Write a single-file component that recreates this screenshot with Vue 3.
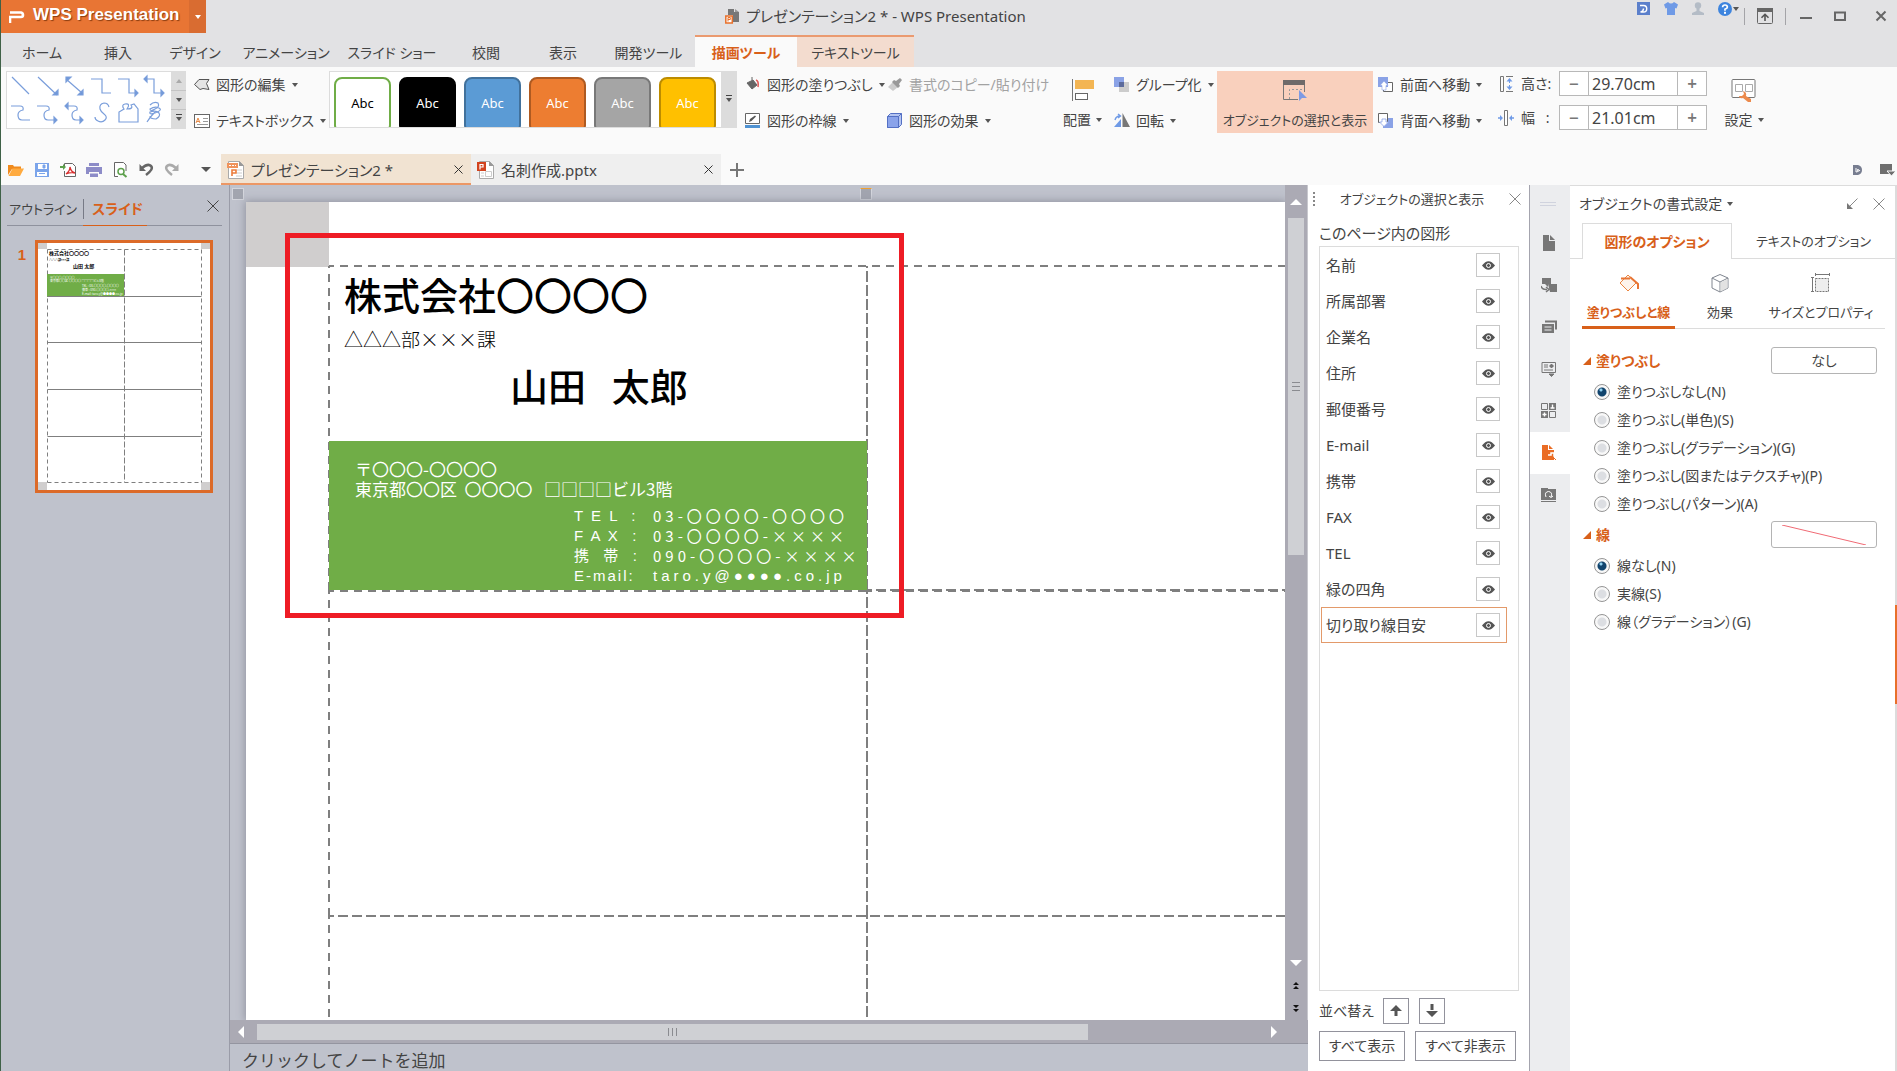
<script setup>
import { ref } from 'vue'

const menuTabs = [
  { label: 'ホーム', width: 80 },
  { label: '挿入', width: 72 },
  { label: 'デザイン', width: 82 },
  { label: 'アニメーション', width: 100 },
  { label: 'スライド ショー', width: 112 },
  { label: '校閲', width: 76 },
  { label: '表示', width: 78 },
  { label: '開発ツール', width: 93 },
  { label: '描画ツール', width: 102, kind: 'active' },
  { label: 'テキストツール', width: 117, kind: 'context' },
]

const shapeStyles = ['outline', 'black', 'blue', 'orange', 'gray', 'yellow']

const objects = ref([
  '名前', '所属部署', '企業名', '住所', '郵便番号', 'E-mail',
  '携帯', 'FAX', 'TEL', '緑の四角', '切り取り線目安',
])
const selected = ref('切り取り線目安')

const height = ref('29.70cm')
const width = ref('21.01cm')

const fill = ref('N')
const fillOptions = [
  { value: 'N', label: '塗りつぶしなし(N)' },
  { value: 'S', label: '塗りつぶし(単色)(S)' },
  { value: 'G', label: '塗りつぶし(グラデーション)(G)' },
  { value: 'P', label: '塗りつぶし(図またはテクスチャ)(P)' },
  { value: 'A', label: '塗りつぶし(パターン)(A)' },
]
const line = ref('N')
const lineOptions = [
  { value: 'N', label: '線なし(N)' },
  { value: 'S', label: '実線(S)' },
  { value: 'G', label: '線（グラデーション）(G)' },
]

const contacts = [
  { label: 'T E L  :', value: '03-〇〇〇〇-〇〇〇〇' },
  { label: 'F A X  :', value: '03-〇〇〇〇-××××' },
  { label: '携  帯  :', value: '090-〇〇〇〇-××××' },
  { label: 'E-mail:', value: 'taro.y@●●●●.co.jp', latin: true },
]
</script>

<template>
  <div class="app">
    <header class="top">
      <div class="titlebar">
        <button class="brand">
          <svg width="16" height="12" viewBox="0 0 16 12"><path d="M1 12V6h11q2 0 2-2T12 1.500H1" fill="none" stroke="#fff" stroke-width="2.600" /></svg>
          <span class="brand-name">WPS Presentation</span>
          <span class="brand-drop"><i class="caret"></i></span>
        </button>
        <h1 class="doc-title">
          <svg width="15" height="15" viewBox="0 0 15 15">
            <path d="M3 0h6v3h5v10H8V6H3z" fill="#777" /><path d="M10 0l4 3h-4z" fill="#999" />
            <rect x=".8" y="7" width="6.500" height="7" fill="#fff" stroke="#e8702a" stroke-width="1.500" />
            <path d="M3 12.500v-4h2.300v2H3" fill="none" stroke="#e8702a" />
          </svg>
          プレゼンテーション2 * - WPS Presentation
        </h1>
        <div class="tools">
          <button aria-label="Docer"><svg width="14" height="14" viewBox="0 0 14 14"><rect width="13" height="13" fill="#5b7fcb" /><path d="M3 3.500h3.500a3 3 0 010 6.500H3.500q3-.5 3-3.500" fill="none" stroke="#fff" stroke-width="1.400" /></svg></button>
          <button aria-label="スキン"><svg width="14" height="14" viewBox="0 0 14 14"><path d="M0 2.500L4 0q3 3 6 0l4 2.500-1.500 4-1.500-.5v7H3V6l-1.500.5z" fill="#6f9ae6" /></svg></button>
          <button aria-label="アカウント"><svg width="14" height="14" viewBox="0 0 14 14"><circle cx="7" cy="3.500" r="3.200" fill="#b4bcc6" /><path d="M5.500 6h3v3l4.500 2v2H1v-2l4.500-2z" fill="#b4bcc6" /></svg></button>
          <button aria-label="ヘルプ" class="help"><svg width="14" height="14" viewBox="0 0 14 14"><circle cx="7" cy="7" r="7" fill="#3d84de" /><path d="M4.600 5.300Q4.700 3 7 3t2.400 2.100Q9.400 6.500 7 7.200v1.600" fill="none" stroke="#fff" stroke-width="1.700" /><rect x="6" y="9.800" width="2" height="2" fill="#fff" /></svg><i class="caret"></i></button>
        </div>
        <div class="window-btns">
          <i class="sep"></i>
          <button class="pin" aria-label="リボン"><svg width="16" height="16" viewBox="0 0 16 16"><rect x=".5" y=".5" width="15" height="15" rx="1" fill="none" stroke="#666" /><rect width="16" height="4" fill="#666" /><path d="M8 13V7M4.500 9.800L8 6.300l3.500 3.500" fill="none" stroke="#555" stroke-width="1.600" /></svg></button>
          <i class="sep"></i>
          <button class="min" aria-label="最小化"><svg width="12" height="12"><rect y="7" width="12" height="2" fill="#666" /></svg></button>
          <button class="max" aria-label="最大化"><svg width="12" height="12"><path d="M1 2.500h10v7.500H1z" fill="none" stroke="#666" stroke-width="2" /></svg></button>
          <button class="close" aria-label="閉じる"><svg width="12" height="12"><path d="M1.500 1.500l9 9M10.500 1.500l-9 9" stroke="#666" stroke-width="2" /></svg></button>
        </div>
      </div>
      <nav class="menu">
        <button v-for="t in menuTabs" :key="t.label" :class="t.kind" :style="{ width: t.width + 'px' }">{{ t.label }}</button>
      </nav>
    </header>

    <section class="ribbon">
      <div class="shape-gallery">
        <svg width="164" height="56" viewBox="0 0 164 56" fill="none" stroke="#7a9edb" stroke-width="1.200">
          <path d="M5 5l17 17M31 5l19 18M59 7l16 14" />
          <path d="M51 18v5h-5zM59 5h5l-5 5zM76 18v5h-5z" fill="#6f97d8" />
          <path d="M84 7h11v14h9M111 7h11v14h7M139 7h8v14h9" />
          <path d="M128 18l3 3-3 3zM140 4l-3 3 3 3zM154 18l3 3-3 3z" fill="#6f97d8" />
          <path d="M4 34h9q4 0 3 4-5 1-5 5 0 5 4 5h8M30 34h9q4 0 3 4-5 1-5 5 0 5 4 5h7M60 34h7q4 0 3 4-5 1-5 5 0 5 4 5h5" />
          <path d="M47 45l3 3-3 3zM61 31l-3 3 3 3zM73 45l3 3-3 3z" fill="#6f97d8" />
          <path d="M102 35q-1-4-5-4-5 1-4 6 1 3 4 5 4 3 1 6-3 3-7 1-3-1-3-4" />
          <path d="M112 50V40l5-3q-3-4 1-5 6-1 2 5 7 0 4-4l3-1 4 5v13z" />
          <path d="M143 33q4-4 8-2 2 4-3 6-5 3-5 0 5-3 9-1 4 2-4 5-6 2-5-1 6-2 9 1 2 3-3 6-6 0-6-3M140 50q3-5 8-10" />
        </svg>
        <div class="scroller"><button aria-label="上"><i class="caret up dim"></i></button><button aria-label="下"><i class="caret"></i></button><button aria-label="その他"><i class="caret bar"></i></button></div>
      </div>

      <div class="cmds cmds-edit">
        <button><svg width="16" height="14" viewBox="0 0 16 14"><path d="M5 1.500h10l-2.500 4 2.500 6-6-1-3 1-5.500-5z" fill="#e4e4e4" stroke="#555" /></svg>図形の編集<i class="caret"></i></button>
        <button><svg width="16" height="14" viewBox="0 0 16 14"><rect x=".5" y=".5" width="15" height="13" fill="#fff" stroke="#666" /><path d="M2 9l2-5 2 5M2.800 7.500h2.500" fill="none" stroke="#e88a45" /><path d="M9 4.500h5M9 7.500h5M3 10.500h11" stroke="#999" /></svg>テキストボックス<i class="caret"></i></button>
      </div>

      <div class="style-gallery">
        <div class="swatches">
          <button v-for="s in shapeStyles" :key="s" :class="['swatch', s]">Abc</button>
        </div>
        <div class="scroller"><button aria-label="スタイル一覧"><i class="caret bar"></i></button></div>
      </div>

      <div class="cmds cmds-fill">
        <button><svg width="16" height="16" viewBox="0 0 16 16"><path d="M7 0v3M2 6l6-3 4 5-5 4z" fill="#666" stroke="#666" /><path d="M11 3q3 1 2 7" fill="none" stroke="#e05a5a" stroke-width="1.600" /></svg>図形の塗りつぶし<i class="caret"></i></button>
        <button><svg width="16" height="16" viewBox="0 0 16 16"><path d="M.5.5h14v10H.5z" fill="#fff" stroke="#666" /><path d="M4 9l1-3 5-3.500 1 1L6.500 8z" fill="#555" /><rect y="12" width="15" height="3" fill="#4f92d2" /></svg>図形の枠線<i class="caret"></i></button>
      </div>
      <div class="cmds cmds-effect">
        <button disabled><svg width="16" height="16" viewBox="0 0 16 16"><path d="M1 10l5-5 5 5-5 4z" fill="#ccc" /><path d="M7 3l2 1 4-3 2 2-3 4 1 2-2 2-6-6z" fill="#999" /></svg>書式のコピー/貼り付け</button>
        <button><svg width="16" height="16" viewBox="0 0 16 16" stroke="#5470c4" stroke-linejoin="round"><path d="M.5 3.500l3-3h11v11l-3 3H.5z" fill="#b4c4f0" /><path d="M.5 3.500h11v11H.5z" fill="#8aa3ea" /><path d="M11.500 3.500l3-3" fill="none" /></svg>図形の効果<i class="caret"></i></button>
      </div>
      <button class="big align">
        <svg width="24" height="24" viewBox="0 0 24 24"><path d="M1.500 0v22" stroke="#777" /><rect x="4" y="1" width="19" height="9" fill="#f3b553" /><rect x="4.500" y="14.500" width="12" height="6" fill="#fff" stroke="#666" /></svg>
        <span>配置<i class="caret"></i></span>
      </button>
      <div class="cmds cmds-group">
        <button><svg width="16" height="16" viewBox="0 0 16 16"><rect width="10" height="10" fill="#8aa2e6" /><rect x="5" y="5" width="10" height="10" fill="#ccc" /><rect x="5" y="5" width="5" height="5" fill="#5c6b9c" /></svg>グループ化<i class="caret"></i></button>
        <button><svg width="16" height="16" viewBox="0 0 16 16"><path d="M7 6v8H0z" fill="#6f9ae6" /><path d="M8.500 0v14H16z" fill="#777" /><path d="M1 7q1-4 5-4M4 1l2.500 2L4 5" fill="none" stroke="#6f9ae6" stroke-width="1.400" /></svg>回転<i class="caret"></i></button>
      </div>
      <button class="big pane-toggle">
        <svg width="24" height="24" viewBox="0 0 24 24"><path d="M.5 3v17.500H15M21.500 3v10" fill="none" stroke="#777" /><rect y="1" width="22" height="5" fill="#6e6a6a" /><path d="M6.500 20V10.500H21" fill="none" stroke="#999" stroke-dasharray="2 2" /><path d="M16 11v11l3-3h5z" fill="#7d9ae4" /></svg>
        <span>オブジェクトの選択と表示</span>
      </button>
      <div class="cmds cmds-order">
        <button><svg width="16" height="16" viewBox="0 0 16 16"><path d="M5.500 5.500h9v9h-9z" fill="#fff" stroke="#666" /><rect width="10" height="10" fill="#8aa2e6" /><path d="M6 4l4 4.500H8V13H4V8.500H2z" fill="#fff" stroke="#8aa2e6" stroke-width=".6" /></svg>前面へ移動<i class="caret"></i></button>
        <button><svg width="16" height="16" viewBox="0 0 16 16"><rect x="5" y="5" width="10" height="10" fill="#8aa2e6" /><path d="M.5.500h9v9h-9z" fill="#fff" stroke="#666" /><path d="M6 13.500L1.500 9H4V6h4v3h2.500z" fill="#fff" stroke="#8aa2e6" stroke-width=".8" /></svg>背面へ移動<i class="caret"></i></button>
      </div>
      <div class="size">
        <div class="size-row">
          <svg width="16" height="16" viewBox="0 0 16 16"><path d="M2.500.5h3v15h-3zM8 .5h7M8 15.500h7" fill="none" stroke="#777" /><path d="M11.500 2l3 3.500h-6zM11.500 14l3-3.500h-6z" fill="#6f9ae6" /><path d="M11.500 4v8" stroke="#6f9ae6" stroke-dasharray="3 2" /></svg>
          <label for="size-h">高さ:</label>
          <div class="spinner"><button aria-label="高さを減らす">−</button><input id="size-h" v-model="height" /><button aria-label="高さを増やす">+</button></div>
        </div>
        <div class="size-row">
          <svg width="16" height="16" viewBox="0 0 16 16"><path d="M6.500.5h3v15h-3z" fill="#fff" stroke="#777" /><path d="M5 8L2 5v6zM11 8l3-3v6z" fill="#6f9ae6" /><path d="M0 8h3M13 8h3" stroke="#6f9ae6" stroke-width="1.500" /></svg>
          <label for="size-w">幅&ensp;&nbsp;:</label>
          <div class="spinner"><button aria-label="幅を減らす">−</button><input id="size-w" v-model="width" /><button aria-label="幅を増やす">+</button></div>
        </div>
      </div>
      <button class="big settings">
        <svg width="26" height="24" viewBox="0 0 26 24"><rect x="1" y=".5" width="23" height="18" rx="1" fill="#fff" stroke="#777" /><path d="M4.500 5.500h7v7h-7zM14.500 5.500h7v7h-7z" fill="none" stroke="#aaa" /><path d="M8 17q0 3 4 2l5 4h3v-3l-5-3q1-4-3-5l1 3-2 2z" fill="#ec8a4c" /></svg>
        <span>設定<i class="caret"></i></span>
      </button>
    </section>

    <section class="docbar">
      <div class="quick">
        <button aria-label="開く"><svg width="16" height="16" viewBox="0 0 16 16"><path d="M0 3h5l1 1.500h7V7H4L0 13z" fill="#f08a1c" /><path d="M4.500 6.500H16L12 14H.5z" fill="#ffab40" /></svg></button>
        <button aria-label="保存"><svg width="16" height="16" viewBox="0 0 16 16"><path d="M1 1h14v14H1z" fill="#7ba4ea" /><path d="M4 2h9v5H4zM3 10h10v4H3z" fill="#fff" /><path d="M9 3h2v3H9zM5 11.500h6" fill="#7ba4ea" stroke="#7ba4ea" /></svg></button>
        <button aria-label="PDF"><svg width="16" height="16" viewBox="0 0 16 16"><path d="M4.500 6V1.500h8l3 3v10h-11V9" fill="#fff" stroke="#666" /><path d="M6 12q4-3 4-7 1 5 5 6-4-1-9 1" fill="none" stroke="#d83030" stroke-width="1.300" /><path d="M0 4h3V2l3 3-3 3V6H0z" fill="#5da04c" /></svg></button>
        <button aria-label="印刷"><svg width="16" height="16" viewBox="0 0 16 16"><path d="M3 1h10v3H3zM0 5h16v7h-3v-2H3v2H0zM4 11.500h8V15H4z" fill="#8d8cc8" /></svg></button>
        <button aria-label="プレビュー"><svg width="16" height="16" viewBox="0 0 16 16"><path d="M6 14.500H2.500V.5h9l2.500 2.500v6" fill="#fff" stroke="#666" /><circle cx="9" cy="9.500" r="3" fill="none" stroke="#5da04c" stroke-width="1.500" /><path d="M11 12l3.500 3" stroke="#5da04c" stroke-width="2" /></svg></button>
        <button aria-label="元に戻す"><svg width="16" height="16" viewBox="0 0 16 16"><path d="M4 6q6-5 9-2t-5 9" fill="none" stroke="#666" stroke-width="2.500" /><path d="M1.500 2v7H8z" fill="#666" /></svg></button>
        <button aria-label="やり直し"><svg width="16" height="16" viewBox="0 0 16 16"><path d="M12 6Q6 1 3 4t5 9" fill="none" stroke="#aaa" stroke-width="2.500" /><path d="M14.500 2v7H8z" fill="#aaa" /></svg></button>
        <button aria-label="カスタマイズ"><i class="caret wide"></i></button>
      </div>
      <div class="doc-tab active">
        <svg width="18" height="20" viewBox="0 0 18 20"><path d="M1.500 1.500h11l4 4v13h-15z" fill="#fff" stroke="#aaa" /><path d="M12 1v5h5z" fill="#999" /><rect x="0" y="3" width="11" height="5" fill="#f0935c" /><path d="M2 5.500h7" stroke="#fff" stroke-dasharray="2 1" /><path d="M5 16v-6h4v3H5" fill="none" stroke="#ec7c3c" stroke-width="1.600" /><path d="M10 10h5M10 13h5M9 16h6" stroke="#ccc" /></svg>
        <span>プレゼンテーション2 *</span>
        <button aria-label="閉じる"><svg width="9" height="9"><path d="M.5.5l8 8M8.500.5l-8 8" stroke="#333" /></svg></button>
      </div>
      <div class="doc-tab">
        <svg width="18" height="20" viewBox="0 0 18 20"><path d="M2.500 1.500h10l4 4v13h-14z" fill="#fff" stroke="#aaa" /><path d="M12 1v5h5z" fill="#999" /><rect x="0" y="2" width="9" height="9" fill="#d2431f" /><path d="M3 9.500v-5h3v2.500H3" fill="none" stroke="#fff" stroke-width="1.200" /><path d="M8.500 11.500h6v5h-6zM4 13h3M4 16h3" fill="none" stroke="#ccc" /></svg>
        <span>名刺作成.pptx</span>
        <button aria-label="閉じる"><svg width="9" height="9"><path d="M.5.5l8 8M8.500.5l-8 8" stroke="#333" /></svg></button>
      </div>
      <button class="new-tab" aria-label="新規"><svg width="14" height="14"><path d="M7 0v14M0 7h14" stroke="#777" stroke-width="2" /></svg></button>
      <div class="doc-right">
        <button aria-label="Docer"><svg width="10" height="10" viewBox="0 0 10 10"><path d="M0 0h5q4 1 4 5t-4 5H0z" fill="#777d90" /><path d="M3 3v4q2 1 2-3 0 4 2 1" stroke="#fff" fill="none" /></svg></button>
        <button aria-label="タブ一覧"><svg width="16" height="12" viewBox="0 0 16 12"><path d="M0 0h12v10H0z" fill="#6e6e6e" /><path d="M7 7h9l-4.500 5z" fill="#6e6e6e" stroke="#fafafa" /></svg></button>
      </div>
    </section>

    <main class="work">
      <aside class="slides">
        <div class="slides-tabs">
          <button>アウトライン</button>
          <button class="on">スライド</button>
          <button class="x" aria-label="閉じる"><svg width="12" height="12"><path d="M.5.5l11 11M11.500.5l-11 11" stroke="#444" /></svg></button>
        </div>
        <div class="thumb-row">
          <b>1</b>
          <div class="thumb">
            <svg width="172" height="247" viewBox="0 0 172 247">
              <rect width="172" height="247" fill="#fff" />
              <path d="M0 0h9v6H0zM163 0h9v6h-9zM0 239h9v8H0zM163 239h9v8h-9z" fill="#d0cece" />
              <path d="M9.500 6.500v233M163.500 6.500v233M9.500 6.500h154M9.500 239.500h154" stroke="#7f7f7f" stroke-dasharray="4 3" />
              <path d="M86.500 6.500v233" stroke="#7f7f7f" stroke-dasharray="6 2" />
              <rect x="9" y="31" width="77" height="23" fill="#70ad47" />
              <path d="M9.500 53.500h154M9.500 99.500h154M9.500 146.500h154M9.500 193.500h154" stroke="#7f7f7f" />
              <g font-weight="700" fill="#000">
                <text x="11" y="12" font-size="5">株式会社〇〇〇〇</text>
                <text x="11" y="18" font-size="3">△△△部×××課</text>
                <text x="35" y="25" font-size="5">山田  太郎</text>
              </g>
              <g fill="#fff" font-size="3">
                <text x="12" y="36">〒〇〇〇-〇〇〇〇</text>
                <text x="12" y="39">東京都〇〇区 〇〇〇〇 □□□□ビル3階</text>
                <text x="44" y="44">TEL : 03-〇〇〇〇-〇〇〇〇</text>
                <text x="44" y="48">携帯 : 090-〇〇〇〇-××××</text>
                <text x="44" y="52">E-mail: taro.y@●●●●.co.jp</text>
              </g>
            </svg>
          </div>
        </div>
      </aside>

      <section class="editor">
        <div class="stage-row">
          <div class="stage">
            <i class="handle start"></i>
            <i class="handle mid"></i>
            <div class="slide">
              <i class="corner"></i>
              <svg class="guides" fill="none" stroke="#7f7f7f" stroke-width="2">
                <path d="M83 64H3000" stroke-dasharray="8 6" stroke-dashoffset="3" />
                <path d="M83 64V388" stroke-dasharray="8 6" stroke-dashoffset="6" />
                <path d="M83 388V714" stroke-dasharray="8 6" stroke-dashoffset="4" />
                <path d="M83 714V3000" stroke-dasharray="8 6" stroke-dashoffset="5" />
                <path d="M621 64V388" stroke-dasharray="11 3" stroke-dashoffset="9" />
                <path d="M621 388V714" stroke-dasharray="11 3" stroke-dashoffset="7" />
                <path d="M621 714V3000" stroke-dasharray="11 3" stroke-dashoffset="8" />
                <path d="M83 389H621" stroke-dasharray="8 6" stroke-dashoffset="3" />
                <path d="M621 388H3000" stroke-dasharray="10 4" stroke-dashoffset="5" />
                <path d="M621 389H3000" stroke-dasharray="8 6" stroke-dashoffset="3" />
                <path d="M83 714H3000" stroke-dasharray="10 4" stroke-dashoffset="5" />
              </svg>
              <article class="card">
                <div class="card-top">
                  <p class="company">株式会社〇〇〇〇</p>
                  <p class="dept">△△△部×××課</p>
                  <p class="person">{{ '山田   太郎' }}</p>
                </div>
                <div class="card-green">
                  <p>〒〇〇〇-〇〇〇〇</p>
                  <p>{{ '東京都〇〇区  〇〇〇〇   □□□□ビル3階' }}</p>
                  <dl>
                    <template v-for="c in contacts" :key="c.label">
                      <dt>{{ c.label }}</dt>
                      <dd :class="{ latin: c.latin }">{{ c.value }}</dd>
                    </template>
                  </dl>
                </div>
              </article>
              <i class="red-frame"></i>
            </div>
          </div>
          <div class="vscroll">
            <button aria-label="上へ"><svg width="12" height="6"><path d="M6 0l6 6H0z" fill="#fff" /></svg></button>
            <div class="vtrack"><div class="vthumb"><svg width="8" height="9"><path d="M0 .5h8M0 4.500h8M0 8.500h8" stroke="#8a8b90" /></svg></div></div>
            <button aria-label="下へ"><svg width="12" height="6"><path d="M0 0h12L6 6z" fill="#fff" /></svg></button>
            <button aria-label="前のスライド"><svg width="6" height="8"><path d="M3 0l3 3H0zM3 4l3 3H0z" fill="#111" /></svg></button>
            <button aria-label="次のスライド"><svg width="6" height="8"><path d="M0 0h6L3 3zM0 4h6L3 7z" fill="#111" /></svg></button>
          </div>
        </div>
        <div class="hscroll">
          <button aria-label="左へ"><svg width="6" height="12"><path d="M6 0v12L0 6z" fill="#fff" /></svg></button>
          <div class="htrack"><div class="hthumb"><svg width="9" height="8"><path d="M.5 0v8M4.500 0v8M8.500 0v8" stroke="#8a8b90" /></svg></div></div>
          <button class="right" aria-label="右へ"><svg width="6" height="12"><path d="M0 0v12l6-6z" fill="#fff" /></svg></button>
        </div>
        <p class="notes">クリックしてノートを追加</p>
      </section>

      <aside class="objects">
        <header>
          <svg width="2" height="15"><path d="M1 0v15" stroke="#888" stroke-width="2" stroke-dasharray="2 2" /></svg>
          <h2>オブジェクトの選択と表示</h2>
          <button aria-label="閉じる"><svg width="12" height="12"><path d="M.5.5l11 11M11.500.5l-11 11" stroke="#888" /></svg></button>
        </header>
        <h3>このページ内の図形</h3>
        <ul>
          <li v-for="o in objects" :key="o" :class="{ on: o === selected }" @click="selected = o">
            <span>{{ o }}</span>
            <button :aria-label="o + 'の表示'"><svg width="13" height="9" viewBox="0 0 13 9"><path d="M0 4.500Q6.500-4 13 4.500 6.500 13 0 4.500z" fill="#555" /><circle cx="6.500" cy="4.500" r="2" fill="none" stroke="#fff" /></svg></button>
          </li>
        </ul>
        <div class="sort">
          <span>並べ替え</span>
          <button aria-label="上へ移動"><svg width="12" height="12"><path d="M6 0l6 6H7.500v5h-3V6H0z" fill="#555" /></svg></button>
          <button aria-label="下へ移動"><svg width="12" height="14"><path d="M6 13l6-6H0zM4.500 0h3v6h-3z" fill="#555" /></svg></button>
        </div>
        <div class="all">
          <button>すべて表示</button>
          <button>すべて非表示</button>
        </div>
      </aside>

      <nav class="rail">
        <svg class="rail-grip" width="16" height="4"><path d="M0 .5h16M0 3.500h16" stroke="#d0d3de" /></svg>
        <button aria-label="新規"><svg width="16" height="16"><path d="M2 0h6v6h6v10H2z" fill="#777" /><path d="M9 0l5 5H9z" fill="#777" /></svg></button>
        <button aria-label="レイアウト"><svg width="16" height="16"><path d="M1 1h9v6H7v3L4 7H1zM7 7h9v8H9z" fill="#777" /><path d="M0 9q1 4 6 3.500M5 10l3 2.500L5 15" fill="none" stroke="#777" stroke-width="1.500" /></svg></button>
        <button aria-label="スライド"><svg width="16" height="14"><path d="M4 1.500h11v8" fill="none" stroke="#777" stroke-width="2" /><path d="M1 4h12v9H1z" fill="#777" /><path d="M3.500 7h7M3.500 10h7" stroke="#ecedef" /></svg></button>
        <button aria-label="アニメーション"><svg width="16" height="16"><path d="M1 1.500h13.500v10H1z" fill="none" stroke="#777" /><path d="M3 4h4M3 6h4M3 9h9M8 13h5l-2.500 2.500z" stroke="#777" fill="#777" /><path d="M10.500 3v4M8.500 5h4" stroke="#777" stroke-width="2" /></svg></button>
        <button aria-label="クリップアート"><svg width="16" height="16"><path d="M.5.5h6v6h-6zM8.500 8.500h6v6h-6z" fill="none" stroke="#777" /><path d="M8 0h7v7H8zM0 8h7v7H0z" fill="#777" /><path d="M11.500 1.500v4M9.500 5h4M3.500 9.500v4M1.500 11.500h4" stroke="#fff" stroke-width="1.400" /></svg></button>
        <button class="on" aria-label="書式設定"><svg width="16" height="16"><path d="M1 0h6v5h6v10H1zM8 0l4 4H8z" fill="#ea6c24" /><path d="M7 10h3V8h3v3l3 4" fill="none" stroke="#fff" stroke-width="1.500" /><path d="M11 11l4 4" stroke="#ea6c24" /></svg></button>
        <button aria-label="復元"><svg width="16" height="16"><path d="M0 1h7v1h8v11H0zM0 14h15v1H0z" fill="#777" /><path d="M5 10Q3 5 7.500 4.500 12 5 10 10M8 9l2 1.500L12 9" fill="none" stroke="#fff" /></svg></button>
      </nav>

      <aside class="format">
        <header>
          <h2>オブジェクトの書式設定<i class="caret"></i></h2>
          <button aria-label="ドッキング"><svg width="12" height="12"><path d="M11.500.5L4 8" stroke="#888" /><path d="M1 5v6h6z" fill="#777" /></svg></button>
          <button aria-label="閉じる"><svg width="12" height="12"><path d="M.5.5l11 11M11.500.5l-11 11" stroke="#888" /></svg></button>
        </header>
        <div class="ftabs">
          <button class="on">図形のオプション</button>
          <button>テキストのオプション</button>
        </div>
        <div class="subtabs">
          <button class="on"><svg width="20" height="20" viewBox="0 0 20 20"><path d="M1 10l8-8 8 8-8 8z" fill="#fdf4ec" stroke="#ec8640" /><path d="M2 5.500h9M11 4l8 7v5" fill="none" stroke="#e87534" stroke-width="2" /></svg>塗りつぶしと線</button>
          <button><svg width="20" height="20" viewBox="0 0 20 20" fill="none" stroke="#808690"><path d="M10 1.500l8 3.500v10l-8 4-8-4V5zM2 5l8 4 8-4M10 9v10" /><path d="M10.500 9.500L17.500 6v9l-7 3.500z" fill="#e2e2e2" stroke="none" /></svg>効果</button>
          <button><svg width="20" height="20" viewBox="0 0 20 20" fill="none" stroke="#777"><path d="M1.500 4v14M0 4.500h3M0 18.500h3M4 1.500h14M4.500 0v3M18.500 0v3" /><rect x="4.500" y="5.500" width="13" height="13" fill="#eee" stroke-dasharray="2 1" /></svg>サイズとプロパティ</button>
        </div>
        <fieldset aria-labelledby="sec-fill">
          <div class="sec"><i class="tri"></i><b id="sec-fill">塗りつぶし</b><button>なし</button></div>
          <label v-for="o in fillOptions" :key="o.value"><input v-model="fill" type="radio" name="fill" :value="o.value" />{{ o.label }}</label>
        </fieldset>
        <fieldset aria-labelledby="sec-line">
          <div class="sec"><i class="tri"></i><b id="sec-line">線</b><button aria-label="線の種類"><svg width="84" height="20"><path d="M0 0l84 20" stroke="#f06a74" /></svg></button></div>
          <label v-for="o in lineOptions" :key="o.value"><input v-model="line" type="radio" name="line" :value="o.value" />{{ o.label }}</label>
        </fieldset>
      </aside>
      <div class="edge"><i></i></div>
    </main>
  </div>
</template>

<style>
body { margin: 0; background: #fafafa; }
</style>

<style scoped>
.app {
  display: flex; flex-direction: column; min-height: 100vh; box-sizing: border-box;
  border-left: 1px solid #3f6147; background: #fafafa; color: #444;
  font: 14px/20px "Noto Sans", "Noto Sans CJK JP", sans-serif;
  font-feature-settings: "palt"; white-space: nowrap;
}
.app *, .app *::before { box-sizing: border-box; }
button, input { font: inherit; font-feature-settings: inherit; color: inherit; padding: 0; border: 0; background: none; border-radius: 0; }
h1, h2, h3, p, ul, dl, dd { margin: 0; padding: 0; font: inherit; list-style: none; }
svg { display: block; flex: none; }
.caret { flex: none; width: 0; height: 0; border: 3px solid transparent; border-top: 4px solid #555; border-bottom: 0; }
.caret.up { border-top: 0; border-bottom: 4px solid #555; }
.caret.dim { border-bottom-color: #aaa; }
.caret.wide { display: block; border-width: 5px 5px 0; }
.caret.bar { position: relative; }
.caret.bar::before { content: ""; position: absolute; left: -3px; top: -7px; width: 6px; height: 1px; background: #444; }

.top { background: #e2e2e4; }
.titlebar { display: flex; align-items: flex-start; height: 35px; }
.brand { display: flex; align-items: center; height: 33px; padding-left: 8px; background: #e87534; color: #fff; }
.brand-name { width: 164px; padding: 0 0 4px 8px; text-align: left; font: bold 17px/20px "Liberation Sans", sans-serif; text-shadow: 1px 1px 1px #8a3c10; }
.brand-drop { display: flex; align-items: center; justify-content: center; align-self: stretch; width: 17px; background: #d96c31; }
.brand-drop .caret { border-top-color: #fff; }
.doc-title { flex: 1; display: flex; align-items: center; justify-content: center; gap: 6px; height: 32px; font-size: 15px; padding-right: 92px; }
.tools { display: flex; gap: 13px; padding: 2px 5px 0 0; }
.help { display: flex; align-items: center; gap: 1px; }
.window-btns { display: flex; align-items: center; height: 32px; padding-right: 10px; }
.pin { margin: 0 12px; }
.min { margin-left: 14px; }
.max { margin-left: 22px; }
.close { margin-left: 29px; }
.sep { width: 1px; height: 17px; background: #a4a4a8; }
.menu { display: flex; height: 32px; padding-left: 1px; }
.menu button { padding-top: 4px; }
.menu .active { background: #fafafa; color: #d8601a; font-weight: 700; border-top: 2px solid #ea9a70; padding-top: 2px; }
.menu .context { background: #f3dccf; border-top: 2px solid #ea9a70; padding-top: 2px; }

.ribbon { display: flex; align-items: flex-start; height: 87px; padding-left: 5px; }
.shape-gallery { display: flex; width: 180px; height: 58px; margin-top: 4px; border: 1px solid #dcdcdc; border-right: 0; background: #fff; }
.scroller { display: flex; flex-direction: column; gap: 1px; width: 16px; margin-left: auto; background: #c4c4c4; }
.scroller button { flex: 1; display: flex; align-items: center; justify-content: center; background: #dcdcdc; }
.cmds { display: flex; flex-direction: column; }
.cmds button { display: flex; align-items: center; gap: 6px; height: 36px; text-align: left; }
.cmds button:disabled { color: #a2a2a2; }
.cmds-edit { width: 143px; padding-left: 8px; }
.style-gallery { display: flex; width: 408px; height: 57px; margin-top: 4px; border: 1px solid #dcdcdc; border-right: 0; background: #fff; }
.swatches { display: flex; gap: 8px; padding: 5px 0 0 4px; overflow: hidden; }
.swatch { flex: none; width: 57px; height: 56px; padding-bottom: 5px; border: 2px solid; border-radius: 8px; color: #fff; font-size: 13px; }
.outline { border-color: #70ad47; color: #000; background: #fff; }
.black { background: #000; border-color: #000; }
.blue { background: #5b9bd5; border-color: #41719c; }
.orange { background: #ed7d31; border-color: #ae5a21; }
.gray { background: #a5a5a5; border-color: #787878; }
.yellow { background: #ffc000; border-color: #bc8c00; }
.cmds-fill { width: 150px; padding-left: 8px; }
.cmds-effect { width: 170px; }
.big { display: flex; flex-direction: column; align-items: center; gap: 7px; height: 62px; margin-top: 4px; padding-top: 8px; }
.big span { display: flex; align-items: center; gap: 5px; }
.align { width: 51px; margin-right: 6px; }
.cmds-group { width: 103px; }
.pane-toggle { width: 156px; background: #f9d0bd; font-size: 13px; }
.cmds-order { width: 125px; padding-left: 5px; }
.size { padding-top: 4px; display: flex; flex-direction: column; gap: 9px; }
.size-row { display: flex; align-items: center; }
.size-row label { width: 38px; margin-left: 7px; }
.spinner { display: flex; width: 148px; height: 25px; border: 1px solid #b8b8b8; background: #fff; }
.spinner button { width: 28px; font-size: 17px; color: #777; font-weight: 600; }
.spinner input { width: 90px; border: solid #b8b8b8; border-width: 0 1px; padding-left: 3px; font-size: 16px; }
.settings { width: 56px; margin-left: 9px; }

.docbar { display: flex; align-items: stretch; height: 31px; }
.quick { display: flex; align-items: center; gap: 10px; width: 220px; padding-left: 7px; }
.quick button:last-child { margin-left: 11px; }
.doc-tab { display: flex; align-items: center; width: 250px; padding: 2px 8px 0 6px; background: #efefef; font-size: 15px; border-bottom: 2px solid #efefef; }
.doc-tab.active { background: #f1e3d2; border-bottom-color: #ec9765; }
.doc-tab span { flex: 1; padding-left: 6px; }
.new-tab { margin-left: 9px; }
.doc-right { display: flex; align-items: center; gap: 17px; margin-left: auto; padding-right: 1px; }

.work { flex: 1; display: flex; background: #bfc2cc; }
.slides { flex: none; width: 229px; border-right: 1px solid #9a9ca8; }
.slides-tabs { display: flex; height: 41px; margin: 0 7px 0 6px; border-bottom: 1px solid #8f929e; padding-top: 7px; font-size: 13px; }
.slides-tabs button { height: 34px; padding: 0 3px 0 2px; position: relative; }
.slides-tabs .on { margin-left: 3px; padding: 0 4px 0 9px; color: #d8601a; font-weight: 700; font-size: 14px; border-bottom: 1px solid #d8601a; }
.slides-tabs .on::before { content: ""; position: absolute; left: 0; top: 7px; width: 1px; height: 20px; background: #777a86; }
.slides-tabs .x { margin-left: auto; padding-bottom: 6px; }
.thumb-row { display: flex; justify-content: flex-end; gap: 9px; padding: 14px 16px 0 0; }
.thumb-row b { color: #d8601a; padding-top: 5px; font-size: 15px; font-family: "Liberation Sans", sans-serif; }
.thumb { border: 3px solid #dc6a28; }

.editor { flex: 1; min-width: 0; display: flex; flex-direction: column; }
.stage-row { flex: 1; display: flex; }
.stage { flex: 1; position: relative; overflow: hidden; padding: 17px 0 0 16px; display: flex; }
.handle { position: absolute; top: 3px; width: 12px; height: 12px; background: #a2a5af; border: 1px solid #d4d6dd; }
.handle.start { left: 2px; }
.handle.mid { left: 630px; border-top-color: #f0a030; }
.slide { flex: 1; position: relative; background: #fff; box-shadow: 0 0 8px 1px #9294a0; }
.corner { position: absolute; left: 0; top: 0; width: 83px; height: 65px; background: #d0cece; }
.guides { position: absolute; left: 0; top: 0; width: 100%; height: 100%; }
.card { position: absolute; left: 83px; top: 64px; width: 538px; color: #000; white-space: pre; font-family: "Noto Sans CJK JP", sans-serif; font-feature-settings: normal; }
.card-top { height: 175px; padding: 4px 0 0 15px; }
.company, .person { font-size: 38px; line-height: 48px; font-weight: 500; }
.dept { font-size: 19px; line-height: 24px; padding: 9px 0 10px; font-weight: 300; }
.person { padding-left: 166px; }
.card-green { height: 149px; padding: 18px 0 0 26px; background: #70ad47; color: #fff; font-size: 17px; }
.card-green p { line-height: 20px; }
.card-green dl { display: grid; grid-template-columns: 79px 199px; justify-content: end; padding: 7px 15px 0 0; font-size: 15px; line-height: 20px; }
.card-green dt { font-family: "Liberation Sans", "Noto Sans CJK JP", sans-serif; letter-spacing: 2px; }
.card-green dd { letter-spacing: 4px; }
.card-green .latin { font-family: "Liberation Sans", sans-serif; }
.red-frame { position: absolute; left: 39px; top: 31px; width: 619px; height: 385px; border: 5px solid #ee1c25; }

.vscroll { display: flex; flex-direction: column; width: 23px; background: #abaab4; border-right: 1px solid #c8c8ce; padding-top: 1px; }
.vscroll button { display: flex; align-items: center; justify-content: center; height: 23px; }
.vscroll button:first-child { height: 32px; }
.vtrack { flex: 1; padding: 0 3px; }
.vthumb { height: 46%; background: #cfd0d4; display: flex; align-items: center; justify-content: center; }
.hscroll { display: flex; align-items: center; height: 24px; background: #abaab4; border-bottom: 1px solid #9495a0; }
.hscroll button { width: 27px; padding-left: 8px; }
.hscroll .right { width: 38px; padding-left: 1px; }
.htrack { flex: 1; }
.hthumb { width: 82%; height: 16px; background: #cfd0d4; display: flex; align-items: center; justify-content: center; }
.notes { height: 27px; padding: 5px 0 0 12px; font-size: 17px; line-height: 24px; font-feature-settings: normal; overflow: hidden; }

.objects { flex: none; width: 221px; display: flex; flex-direction: column; background: #fff; padding: 0 10px 10px 11px; }
.objects header { display: flex; align-items: center; height: 28px; margin: 0 -2px 0 -6px; }
.objects h2 { flex: 1; text-align: center; font-size: 13px; }
.objects h3 { font-size: 15px; height: 33px; padding-top: 10px; }
.objects ul { flex: 1; border: 1px solid #dcdcdc; padding-right: 11px; }
.objects li { display: flex; align-items: center; justify-content: space-between; height: 36px; margin-left: 1px; padding: 0 7px 0 5px; font-size: 15px; }
.objects li.on { border: 1px solid #e39a6a; padding: 0 6px 0 4px; }
.objects li button { display: flex; align-items: center; justify-content: center; width: 24px; height: 24px; border: 1px solid #c8c8c8; }
.sort { display: flex; align-items: center; gap: 10px; margin-top: 7px; }
.sort span { width: 54px; }
.sort button { display: flex; align-items: center; justify-content: center; width: 26px; height: 26px; border: 1px solid #92929c; }
.all { display: flex; gap: 10px; margin-top: 7px; }
.all button { width: 86px; height: 30px; border: 1px solid #92929c; }
.all button + button { width: 101px; }

.rail { flex: none; width: 41px; border-left: 1px solid #a4a4ae; background: #ecedef; }
.rail-grip { margin: 17px 0 16px 10px; }
.rail button { display: flex; align-items: center; width: 40px; height: 42px; padding-left: 11px; }
.rail .on { background: #fff; }

.format { flex: none; width: 325px; background: #fff; border-top: 1px solid #dcdcdc; }
.format header { display: flex; align-items: center; gap: 15px; height: 37px; padding: 0 10px 2px 9px; }
.format h2 { flex: 1; display: flex; align-items: center; gap: 5px; }
.ftabs { display: flex; height: 36px; font-size: 13px; }
.ftabs::before { content: ""; width: 12px; border-bottom: 1px solid #dcdcdc; }
.ftabs button { flex: 1; border-bottom: 1px solid #dcdcdc; }
.ftabs .on { flex: none; width: 150px; border: 1px solid #dcdcdc; border-bottom: 0; color: #d8601a; font-weight: 700; font-size: 14px; }
.subtabs { display: flex; height: 70px; margin: 0 10px 18px 12px; border-bottom: 1px solid #dcdcdc; font-size: 13px; }
.subtabs button { display: flex; flex-direction: column; align-items: center; gap: 9px; width: 90px; height: 70px; padding-top: 14px; }
.subtabs button:last-child { flex: 1; padding-right: 8px; }
.subtabs .on { width: 93px; color: #d8601a; font-weight: 700; border-bottom: 3px solid #d8601a; }
fieldset { margin: 0; padding: 0 18px 0 13px; border: 0; min-width: 0; }
fieldset + fieldset { margin-top: 3px; }
.sec { display: flex; align-items: center; height: 27px; margin-bottom: 4px; color: #d8601a; }
.tri { width: 0; height: 0; border-left: 8px solid transparent; border-bottom: 8px solid #d8601a; }
.sec b { flex: 1; padding-left: 5px; }
.sec button { display: flex; align-items: center; justify-content: center; width: 106px; height: 27px; border: 1px solid #b4b4b4; border-radius: 3px; color: #444; }
fieldset label { display: flex; align-items: center; gap: 7px; height: 28px; padding-left: 11px; }
input[type="radio"] { appearance: none; margin: 0; width: 16px; height: 16px; border: 1px solid #949494; border-radius: 50%; background: radial-gradient(circle, #dcdee2 0 4px, #f8f8f8 5px); }
input[type="radio"]:checked { background: radial-gradient(circle at 6px 5px, #8fd0f0 0 1px, transparent 2px), radial-gradient(circle, #12456e 0 4px, #f8f8f8 5px); }
.edge { flex: none; width: 2px; background: #dcdcdc; padding-top: 420px; }
.edge i { display: block; height: 99px; background: #e8702a; }
</style>
